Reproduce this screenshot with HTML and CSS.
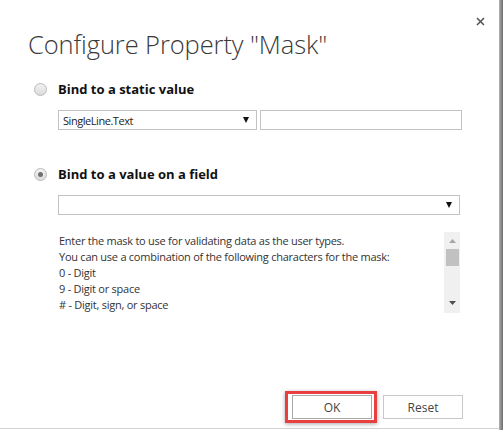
FILE: index.html
```html
<!DOCTYPE html>
<html>
<head>
<meta charset="utf-8">
<link rel="stylesheet" href="styles.css">
</head>
<body>
<div class="frame">
  <div class="dialog">
    <div class="header">
      <h1 class="title">Configure Property "Mask"</h1>
      <button class="close" aria-label="Close">
        <svg width="9" height="9" viewBox="0 0 9 9"><path d="M1 1L8 8M8 1L1 8" stroke="#555" stroke-width="1.6" fill="none"/></svg>
      </button>
    </div>

    <div class="option">
      <span class="radio"></span>
      <span class="label">Bind to a static value</span>
    </div>
    <div class="fields">
      <div class="select short">
        <span class="sel-text">SingleLine.Text</span>
        <svg class="arrow" width="6" height="6" viewBox="0 0 6 6"><polygon points="0,0 6,0 3,6" fill="#111"/></svg>
      </div>
      <div class="input"></div>
    </div>

    <div class="option second">
      <span class="radio checked"></span>
      <span class="label">Bind to a value on a field</span>
    </div>
    <div class="fields">
      <div class="select long">
        <span class="sel-text"></span>
        <svg class="arrow" width="6" height="6" viewBox="0 0 6 6"><polygon points="0,0 6,0 3,6" fill="#111"/></svg>
      </div>
    </div>

    <div class="textarea">
      <div class="text">
        <div>Enter the mask to use for validating data as the user types.</div>
        <div>You can use a combination of the following characters for the mask:</div>
        <div>0 - Digit</div>
        <div>9 - Digit or space</div>
        <div># - Digit, sign, or space</div>
      </div>
      <div class="scrollbar">
        <svg class="sb-up" width="7" height="4" viewBox="0 0 7 4"><polygon points="0,4 7,4 3.5,0" fill="#a6a6a6"/></svg>
        <div class="thumb"></div>
        <svg class="sb-down" width="7" height="4" viewBox="0 0 7 4"><polygon points="0,0 7,0 3.5,4" fill="#505050"/></svg>
      </div>
    </div>

    <div class="footer">
      <span class="highlight"><button class="btn ok">OK</button></span>
      <button class="btn">Reset</button>
    </div>
  </div>
  <div class="edge"></div>
</div>
</body>
</html>
```

FILE: styles.css
```css
html, body {
  margin: 0;
  padding: 0;
  background: #fff;
}
body {
  font-family: "Open Sans", "Liberation Sans", sans-serif;
  color: #222;
}
.frame {
  display: flex;
  width: 503px;
  height: 430px;
}
.dialog {
  width: 499px;
  height: 428px;
  border-bottom: 1px solid #d2d2d2;
  display: flex;
  flex-direction: column;
  background: #fff;
}
.edge {
  flex: 1;
  background: linear-gradient(90deg, #b8b8b8, #8a8a8a 50%, #6f6f6f);
}
.header {
  display: flex;
  justify-content: space-between;
  align-items: flex-start;
  padding: 0 14px 0 28px;
}
.title {
  margin: 28px 0 0 0;
  font-weight: 300;
  font-size: 25.5px;
  line-height: 32px;
  letter-spacing: -0.1px;
  color: #3a3a3a;
}
.close {
  margin-top: 17px;
  padding: 0;
  border: 0;
  background: none;
  width: 9px;
  height: 9px;
  display: flex;
}
.option {
  display: flex;
  align-items: center;
  margin: 21px 0 0 34px;
  height: 16px;
}
.option.second {
  margin-top: 36px;
}
.radio {
  width: 11px;
  height: 11px;
  border-radius: 50%;
  border: 1px solid #b9b9b9;
  background: linear-gradient(#f2f2f2, #dcdcdc);
  margin-right: 11px;
  display: flex;
  align-items: center;
  justify-content: center;
}
.radio.checked::after {
  content: "";
  width: 5px;
  height: 5px;
  border-radius: 50%;
  background: #707070;
}
.label {
  font-weight: 700;
  font-size: 13px;
  line-height: 16px;
  color: #111;
}
.fields {
  display: flex;
  gap: 3px;
  margin: 13px 0 0 58px;
}
.select, .input {
  height: 18px;
  border: 1px solid #c3c3c3;
  background: #fff;
  box-sizing: content-box;
}
.select {
  display: flex;
  align-items: center;
  justify-content: space-between;
  padding: 0 7px 0 4px;
}
.select.short {
  width: 186px;
}
.select.long {
  width: 389px;
}
.input {
  width: 200px;
}
.sel-text {
  font-size: 11px;
  color: #222;
  letter-spacing: -0.45px;
}
.arrow {
  display: block;
}
.textarea {
  display: flex;
  margin: 17px 0 0 58px;
  width: 402px;
  height: 81px;
}
.text {
  flex: 1;
  overflow: hidden;
  font-size: 11px;
  letter-spacing: -0.25px;
  line-height: 16px;
  color: #333;
  padding: 1px 0 0 1px;
  white-space: nowrap;
}
.scrollbar {
  width: 16px;
  background: #f0f0f0;
  display: flex;
  flex-direction: column;
  align-items: center;
}
.sb-up {
  margin-top: 7px;
}
.thumb {
  margin-top: 6px;
  width: 13px;
  height: 17px;
  background: #c1c1c1;
}
.sb-down {
  margin-top: auto;
  margin-bottom: 8px;
}
.footer {
  margin-top: auto;
  display: flex;
  justify-content: flex-end;
  align-items: center;
  gap: 6px;
  padding: 0 36px 5px 0;
}
.highlight {
  display: flex;
  border: 3px solid #e8403f;
  padding: 1px 2px 1px 4px;
  box-shadow: 0 1px 4px rgba(0,0,0,0.35);
}
.btn {
  width: 80px;
  height: 24px;
  border: 1px solid #c8c8c8;
  background: #fff;
  font-family: "Open Sans", "Liberation Sans", sans-serif;
  font-size: 12px;
  color: #444;
  padding: 0;
}
.btn.ok {
  border-color: #a9a9a9;
}
```
